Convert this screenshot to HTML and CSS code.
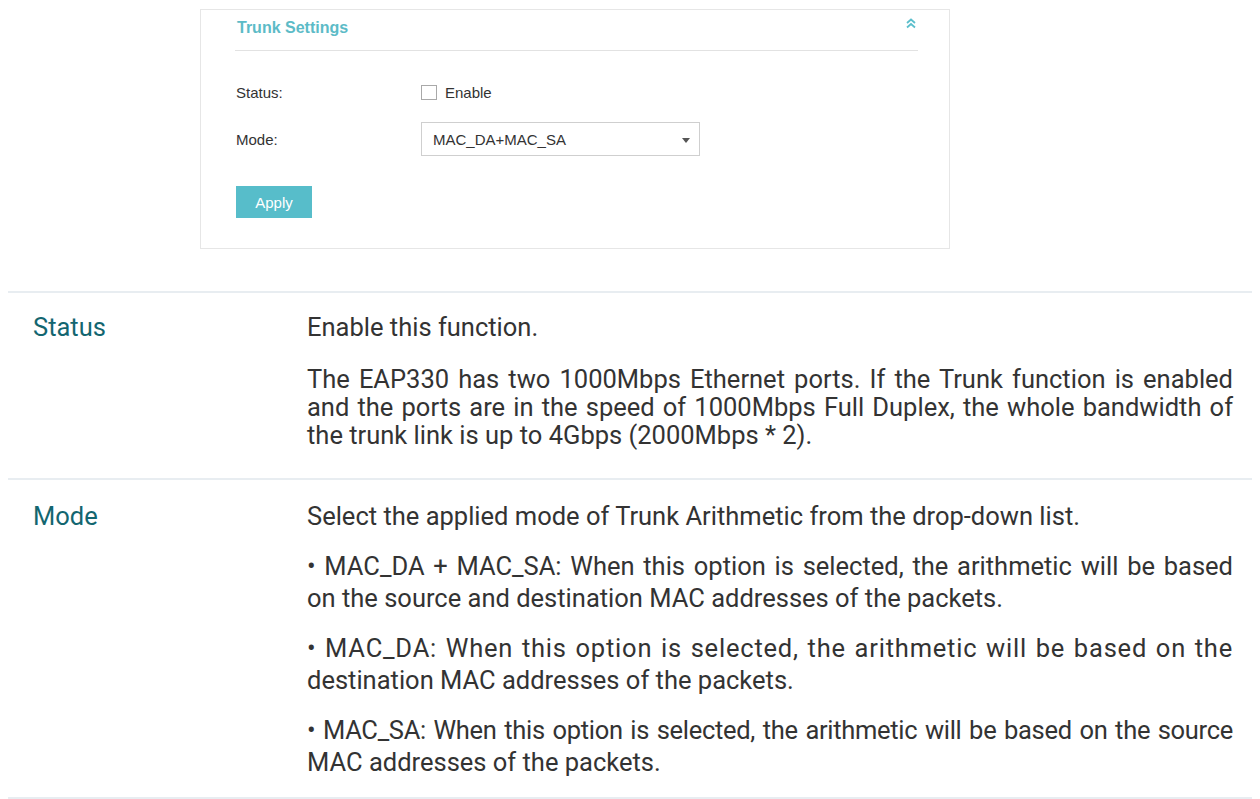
FILE: index.html
```html
<!DOCTYPE html>
<html lang="en">
<head>
<meta charset="utf-8">
<title>Trunk Settings</title>
<link rel="stylesheet" href="styles.css">
</head>
<body>
<div class="page">
  <section class="panel">
    <div class="panel-head">
      <span class="panel-title">Trunk Settings</span>
      <svg class="collapse" width="12" height="11" viewBox="0 0 12 11" aria-hidden="true">
        <polyline points="2,5 6,1.5 10,5" fill="none" stroke="#5cbfcc" stroke-width="1.8"/>
        <polyline points="2,9.5 6,6 10,9.5" fill="none" stroke="#5cbfcc" stroke-width="1.8"/>
      </svg>
    </div>
    <div class="form">
      <div class="form-row status-row">
        <span class="form-label">Status:</span>
        <label class="check"><span class="box"></span><span>Enable</span></label>
      </div>
      <div class="form-row mode-row">
        <span class="form-label">Mode:</span>
        <div class="select"><span>MAC_DA+MAC_SA</span><span class="caret"></span></div>
      </div>
      <div class="form-row">
        <button class="apply" type="button">Apply</button>
      </div>
    </div>
  </section>

  <div class="desc">
    <div class="desc-row row-status">
      <div class="desc-label">Status</div>
      <div class="desc-body">
        <p>Enable this function.</p>
        <p><span class="ln">The EAP330 has two 1000Mbps Ethernet ports. If the Trunk function is enabled</span><span class="ln">and the ports are in the speed of 1000Mbps Full Duplex, the whole bandwidth of</span><span class="end">the trunk link is up to 4Gbps (2000Mbps * 2).</span></p>
      </div>
    </div>
    <div class="desc-row row-mode">
      <div class="desc-label">Mode</div>
      <div class="desc-body">
        <p>Select the applied mode of Trunk Arithmetic from the drop-down list.</p>
        <p><span class="ln">• MAC_DA + MAC_SA: When this option is selected, the arithmetic will be based</span><span class="end">on the source and destination MAC addresses of the packets.</span></p>
        <p><span class="ln wide">• MAC_DA: When this option is selected, the arithmetic will be based on the</span><span class="end">destination MAC addresses of the packets.</span></p>
        <p><span class="ln tight">• MAC_SA: When this option is selected, the arithmetic will be based on the source</span><span class="end">MAC addresses of the packets.</span></p>
      </div>
    </div>
  </div>
</div>
</body>
</html>
```

FILE: styles.css
```css
html, body {
  margin: 0;
  padding: 0;
  background: #ffffff;
}

.page {
  padding-top: 9px;
}

/* ---------- settings panel ---------- */
.panel {
  box-sizing: border-box;
  width: 750px;
  height: 240px;
  margin-left: 200px;
  border: 1px solid #e6e6e6;
  padding: 0 31px 0 34px;
  font-family: "Liberation Sans", Arial, sans-serif;
  color: #333333;
}

.panel-head {
  height: 41px;
  border-bottom: 1px solid #e2e2e2;
  display: flex;
  justify-content: space-between;
  align-items: flex-start;
  padding: 0 1px 0 2px;
  box-sizing: border-box;
}

.panel-title {
  font-size: 16px;
  font-weight: bold;
  color: #5cbbc7;
  margin-top: 9px;
}

.collapse {
  margin-top: 8px;
}

.form {
  display: flex;
  flex-direction: column;
  padding-top: 25px;
  padding-left: 1px;
}

.form-row {
  display: flex;
  align-items: center;
}

.status-row {
  height: 32px;
}

.mode-row {
  margin-top: 14px;
  height: 34px;
}

.form-row:last-child {
  margin-top: 29px;
}

.form-label {
  width: 185px;
  font-size: 15px;
  color: #333333;
}

.check {
  display: flex;
  align-items: center;
  gap: 8px;
  font-size: 15px;
}

.box {
  box-sizing: border-box;
  width: 16px;
  height: 15px;
  border: 1px solid #a9a9a9;
  background: #ffffff;
}

.select {
  box-sizing: border-box;
  width: 279px;
  height: 34px;
  border: 1px solid #cfcfcf;
  display: flex;
  align-items: center;
  justify-content: space-between;
  padding: 0 9px 0 11px;
  font-size: 15px;
  color: #333333;
}

.caret {
  width: 0;
  height: 0;
  border-left: 4px solid transparent;
  border-right: 4px solid transparent;
  border-top: 5px solid #555555;
  margin-top: 2px;
}

.apply {
  width: 76px;
  height: 32px;
  border: none;
  background: #57bdca;
  color: #ffffff;
  font-family: "Liberation Sans", Arial, sans-serif;
  font-size: 15px;
  padding: 0;
  margin-top: 1px;
}

/* ---------- description table ---------- */
.desc {
  margin: 42px 8px 0 8px;
  font-family: Roboto, "Liberation Sans", sans-serif;
  font-size: 25.5px;
  color: #333333;
}

.desc-row {
  display: grid;
  grid-template-columns: 299px 1fr;
  border-top: 2px solid #e8edf1;
  padding-top: 20px;
  padding-right: 19px;
}

.desc-row:last-child {
  border-bottom: 2px solid #e8edf1;
}

.desc-label {
  padding-left: 25px;
  color: #136670;
  line-height: 28px;
}

.desc-body p {
  margin: 0;
}

.ln {
  display: block;
  white-space: nowrap;
  text-align: justify;
  text-align-last: justify;
}

.end {
  display: block;
}

.wide {
  letter-spacing: 0.8px;
}

.tight {
  letter-spacing: -0.3px;
}

.row-status {
  padding-bottom: 29px;
}

.row-status .desc-body p {
  line-height: 28px;
}

.row-status .desc-body p + p {
  margin-top: 24px;
}

.row-mode {
  padding-bottom: 19px;
}

.row-mode .desc-label {
  line-height: 32px;
}

.row-mode .desc-body p {
  line-height: 32px;
}

.row-mode .desc-body p + p {
  margin-top: 18px;
}
```
